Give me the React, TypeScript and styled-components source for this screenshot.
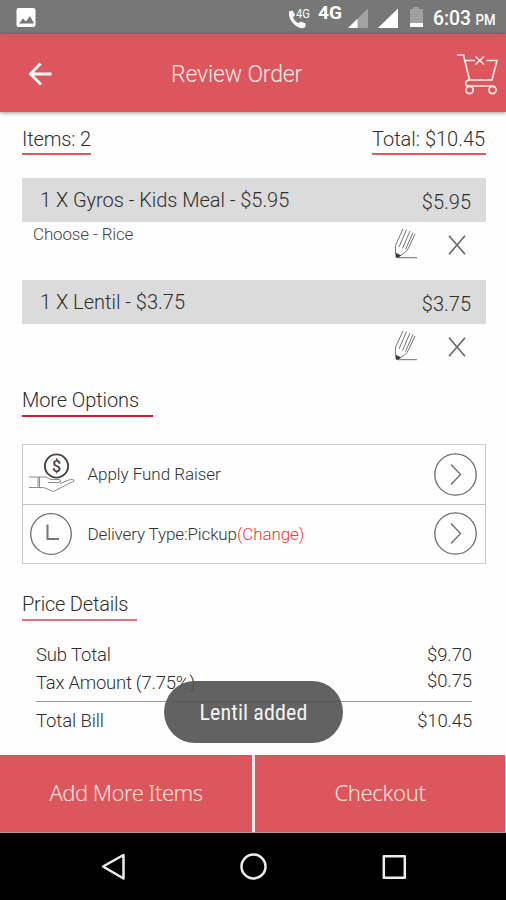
import React from "react";
import styled, { createGlobalStyle } from "styled-components";

const GlobalStyle = createGlobalStyle`
  * { box-sizing: border-box; }
  body { margin: 0; background: #fefefe; font-family: Roboto, sans-serif; }
`;

const Screen = styled.div`
  position: relative;
  width: 506px;
  height: 900px;
  display: flex;
  flex-direction: column;
  overflow: hidden;
  background: #fefefe;
`;

const Label = styled.span<{
  $size: number;
  $spacing?: number;
  $weight?: number;
  $color?: string;
  $shift?: number;
}>`
  display: block;
  white-space: nowrap;
  line-height: 24px;
  font-size: ${(p) => p.$size}px;
  font-weight: ${(p) => p.$weight ?? 300};
  letter-spacing: ${(p) => p.$spacing ?? 0}px;
  color: ${(p) => p.$color ?? "#2e2e2e"};
  margin-top: ${(p) => p.$shift ?? 0}px;
`;

const StatusBar = styled.div`
  height: 34px;
  flex: none;
  background: #777777;
`;

const Header = styled.header`
  height: 78px;
  flex: none;
  display: flex;
  align-items: center;
  padding: 2px 6px 0 28px;
  background: #dc565d;
  box-shadow: 0 1px 4px rgba(0, 0, 0, 0.4);
`;

const HeaderTitle = styled.h1`
  flex: 1;
  margin: 2px 0 0 119px;
  font-size: 23px;
  font-weight: 300;
  line-height: 28px;
  letter-spacing: -0.15px;
  color: #ffece5;
`;

const Content = styled.main`
  flex: 1;
  display: flex;
  flex-direction: column;
  padding: 14px 20px 0 22px;
`;

const Summary = styled.div`
  display: flex;
  justify-content: space-between;
  margin-bottom: 23px;
`;

const Underlined = styled.div<{ $width: number; $color?: string; $height?: number }>`
  width: ${(p) => p.$width}px;
  height: ${(p) => p.$height ?? 29}px;
  flex: none;
  border-bottom: 2px solid ${(p) => p.$color ?? "#de5a60"};
`;

const Item = styled.section`
  height: 102px;
`;

const ItemBar = styled.div`
  height: 44px;
  display: flex;
  justify-content: space-between;
  padding: 10px 15px 0 18px;
  background: #dbdbdb;
`;

const ItemFooter = styled.div`
  display: flex;
  justify-content: space-between;
  padding: 0 20px 0 11px;
`;

const ItemActions = styled.div`
  display: flex;
  align-items: flex-end;
  gap: 30px;
  margin-left: auto;
  padding-top: 6px;
`;

const OptionList = styled.div`
  display: flex;
  flex-direction: column;
  flex: none;
  height: 120px;
  margin: 27px 0 28px;
  border: 1px solid #c9c9c9;
`;

const OptionRow = styled.div`
  flex: 1;
  display: flex;
  align-items: center;
  padding: 0 8px 0 6px;
  & + & {
    border-top: 1px solid #c4c4c4;
  }
`;

const OptionText = styled.div`
  flex: 1;
  display: flex;
  padding: 0 0 0 12.5px;
`;

const PriceTable = styled.div`
  display: flex;
  flex-direction: column;
  padding: 22px 14px 0 14px;
`;

const PriceRow = styled.div<{ $height: number; $rule?: boolean }>`
  display: flex;
  justify-content: space-between;
  height: ${(p) => p.$height}px;
  border-bottom: ${(p) => (p.$rule ? "1px solid #9a9a9a" : "none")};
`;

const ButtonBar = styled.div`
  display: grid;
  grid-template-columns: 252px 250px;
  gap: 3px;
  height: 78px;
  flex: none;
  background: #ffe6e6;
  border-bottom: 1px solid #b9989a;
`;

const ActionButton = styled.button`
  display: flex;
  align-items: center;
  justify-content: center;
  border: 0;
  padding: 0 0 4px;
  background: #dc565d;
`;

const ButtonText = styled.span<{ $spacing: number }>`
  font-family: "Noto Sans", sans-serif;
  font-size: 22px;
  font-weight: 350;
  line-height: 28px;
  letter-spacing: ${(p) => p.$spacing}px;
  color: #ffe3da;
`;

const NavBar = styled.nav`
  height: 67px;
  flex: none;
  background: #000;
`;

const Toast = styled.div`
  position: absolute;
  left: 164px;
  top: 681px;
  width: 179px;
  height: 62px;
  display: flex;
  align-items: center;
  justify-content: center;
  border-radius: 31px;
  background: rgba(86, 86, 86, 0.93);
`;

const ToastText = styled.span`
  font-family: "Roboto Condensed", Roboto, sans-serif;
  font-stretch: 75%;
  font-size: 22px;
  letter-spacing: 0.1px;
  color: #f4f4f4;
  white-space: nowrap;
`;

const StatusIcons = () => (
  <svg width="506" height="34" viewBox="0 0 506 34">
    <rect x="16.500" y="8" width="19" height="19" rx="2" fill="#fff" />
    <path d="M19 23.500l4-5 3 3 4-5.500 4 7.500z" fill="#777" />
    <path
      d="M289 11.500c1-1 3-1 4-.5l2 4-2 2.500c1.500 3 3 4.500 5.500 5.500l2.500-1.500 4.500 2v3c-.5 1.500-3 2-5 1.500-6-1.500-11-8-11.500-13z"
      fill="#f7f7f7"
    />
    <text x="296" y="18" fontFamily="Roboto" fontSize="13" fill="#fff" textLength="14" lengthAdjust="spacingAndGlyphs">4G</text>
    <text x="318" y="19" fontFamily="Roboto" fontWeight="700" fontSize="18" fill="#fff" textLength="24" lengthAdjust="spacingAndGlyphs">4G</text>
    <path d="M348 28L368 8.500V28z" fill="#a2a2a2" />
    <path d="M348 28L357.500 18.700V28z" fill="#fff" />
    <path d="M378 28L398 8.500V28z" fill="#fff" />
    <path d="M410 9h3V7h6v2h4v18h-13z" fill="#a0a0a0" />
    <path d="M410 23h13v4h-13z" fill="#fff" />
    <text x="433" y="25.200" fontFamily="Roboto" fontWeight="500" fontSize="20" fill="#fff" textLength="38" lengthAdjust="spacingAndGlyphs">6:03</text>
    <text x="475.500" y="25.200" fontFamily="Roboto" fontWeight="500" fontSize="14.500" fill="#fff" textLength="20" lengthAdjust="spacingAndGlyphs">PM</text>
  </svg>
);

const BackIcon = () => (
  <svg width="24" height="24" viewBox="0 0 24 24" fill="none" stroke="#fff" strokeWidth="2.800">
    <path d="M12.500 1.500L2.500 12l10.500 10.500M2.500 12H23.500" />
  </svg>
);

const CartIcon = () => (
  <svg width="43" height="44" viewBox="0 0 43 44" fill="none" stroke="#ffeae4" strokeWidth="1.700">
    <path d="M0 3h6.500L12.500 28H35l5-19.500H29.500M8 8.500h10M18.500 4.500l8.500 8M27 4.500l-8.500 8" />
    <path d="M12 28c-4.500 1-4.500 6 0 6h24" />
    <circle cx="12.500" cy="38" r="3.600" />
    <circle cx="35.500" cy="38" r="3.600" />
  </svg>
);

const PencilIcon = () => (
  <svg width="24" height="31" viewBox="0 0 24 31" fill="none" stroke="#777" strokeWidth="1">
    <path d="M9 1L1.800 16.500Q1 19 1.700 26M21 6L14.500 20Q13 23 10.500 25L5 28.500" />
    <path d="M12.500 1.500L5 19M16 3L8.500 20.500M19 4.500L11.500 21.500" />
    <path d="M4 29.600H23" stroke="#8a8a8a" strokeWidth="1.300" />
    <path d="M2 25.500l4.500 2-3 2-1.500-.5z" fill="#333" stroke="#444" />
  </svg>
);

const CrossIcon = () => (
  <svg width="18" height="24" viewBox="0 0 18 24" fill="none" stroke="#6a6a6a" strokeWidth="1.700">
    <path d="M1 .8l16 18.400M17 .8L1 19.200" />
  </svg>
);

const FundIcon = () => (
  <svg width="46" height="42" viewBox="0 0 46 42" fill="none" stroke="#8c8c8c" strokeWidth="1">
    <circle cx="27.500" cy="13" r="11.600" stroke="#444" strokeWidth="1.900" />
    <text x="27.500" y="18.800" textAnchor="middle" fontFamily="Roboto" fontWeight="500" fontSize="16" fill="#444" stroke="none">$</text>
    <path d="M0 24H17l5 2.500h8c2 0 2 3 0 3H19M0 34.500H14.500l10 4L45 28c0-2-3-2-5-1l-9 3.500M9 24v10.500M10.500 24v10.500" />
  </svg>
);

const ClockIcon = () => (
  <svg width="46" height="44" viewBox="0 0 46 44" fill="none" stroke="#6b6b6b">
    <circle cx="22" cy="22" r="20.300" strokeWidth="1.300" />
    <path d="M18.500 12.500V27H30" stroke="#777" strokeWidth="2.100" />
  </svg>
);

const ChevronIcon = () => (
  <svg width="43" height="43" viewBox="0 0 43 43" fill="none" stroke="#6b6b6b" strokeWidth="1.300">
    <circle cx="21.500" cy="21.500" r="20.700" />
    <path d="M17 11.500L26.500 21.500L17 31.500" />
  </svg>
);

const NavIcons = () => (
  <svg width="506" height="67" viewBox="0 0 506 67" fill="none" stroke="#ededed" strokeWidth="2.500" strokeLinejoin="round">
    <path d="M103 33.500L123.500 22v23.500z" />
    <circle cx="253.500" cy="33.500" r="12" />
    <rect x="383.800" y="23.300" width="21" height="21.500" />
  </svg>
);

type ItemProps = { name: string; price: string; note?: string; spacing: number };

const OrderItem = ({ name, price, note, spacing }: ItemProps) => (
  <Item>
    <ItemBar>
      <Label $size={20} $spacing={spacing}>{name}</Label>
      <Label $size={20} $spacing={0} $shift={2}>{price}</Label>
    </ItemBar>
    <ItemFooter>
      {note && <Label $size={17} $spacing={-0.15} $color="#444">{note}</Label>}
      <ItemActions>
        <PencilIcon />
        <CrossIcon />
      </ItemActions>
    </ItemFooter>
  </Item>
);

export default function App() {
  return (
    <Screen>
      <GlobalStyle />
      <StatusBar><StatusIcons /></StatusBar>
      <Header>
        <BackIcon />
        <HeaderTitle>Review Order</HeaderTitle>
        <CartIcon />
      </Header>
      <Content>
        <Summary>
          <Underlined $width={69}><Label $size={20} $spacing={-0.15} $shift={1}>Items: 2</Label></Underlined>
          <Underlined $width={114}><Label $size={20} $spacing={0} $shift={1}>Total: $10.45</Label></Underlined>
        </Summary>
        <OrderItem name="1 X Gyros - Kids Meal - $5.95" price="$5.95" note="Choose - Rice" spacing={-0.04} />
        <OrderItem name="1 X Lentil - $3.75" price="$3.75" spacing={0} />
        <Underlined $width={131} $color="#c8202b" $height={35}>
          <Label $size={20} $spacing={-0.1} $shift={6}>More Options</Label>
        </Underlined>
        <OptionList>
          <OptionRow>
            <FundIcon />
            <OptionText><Label $size={17} $color="#333" $spacing={-0.05}>Apply Fund Raiser</Label></OptionText>
            <ChevronIcon />
          </OptionRow>
          <OptionRow>
            <ClockIcon />
            <OptionText>
              <Label $size={17} $color="#333" $spacing={-0.12}>Delivery Type:Pickup</Label>
              <Label $size={17} $color="#f5343c" $spacing={-0.1}>(Change)</Label>
            </OptionText>
            <ChevronIcon />
          </OptionRow>
        </OptionList>
        <Underlined $width={115} $color="#de7479">
          <Label $size={20} $spacing={-0.2}>Price Details</Label>
        </Underlined>
        <PriceTable>
          <PriceRow $height={28}>
            <Label $size={18.5} $spacing={-0.15}>Sub Total</Label>
            <Label $size={18.5} $spacing={-0.1}>$9.70</Label>
          </PriceRow>
          <PriceRow $height={31} $rule>
            <Label $size={18.5} $spacing={-0.25}>Tax Amount (7.75%)</Label>
            <Label $size={18.5} $spacing={-0.1} $shift={-2}>$0.75</Label>
          </PriceRow>
          <PriceRow $height={31}>
            <Label $size={18.5} $spacing={-0.1} $shift={7}>Total Bill</Label>
            <Label $size={18.5} $spacing={-0.15} $shift={7}>$10.45</Label>
          </PriceRow>
        </PriceTable>
      </Content>
      <ButtonBar>
        <ActionButton><ButtonText $spacing={-0.5}>Add More Items</ButtonText></ActionButton>
        <ActionButton><ButtonText $spacing={-0.35}>Checkout</ButtonText></ActionButton>
      </ButtonBar>
      <NavBar><NavIcons /></NavBar>
      <Toast><ToastText>Lentil added</ToastText></Toast>
    </Screen>
  );
}
